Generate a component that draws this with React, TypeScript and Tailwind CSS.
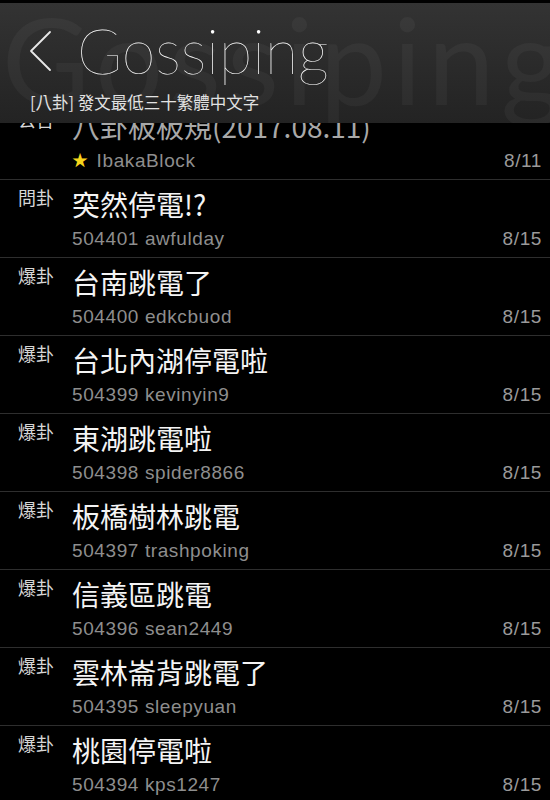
const posts = [
  { tag: '公告', title: '八卦板板規(2017.08.11)', meta: 'IbakaBlock', date: '8/11', pinned: true },
  { tag: '問卦', title: '突然停電!?', meta: '504401 awfulday', date: '8/15' },
  { tag: '爆卦', title: '台南跳電了', meta: '504400 edkcbuod', date: '8/15' },
  { tag: '爆卦', title: '台北內湖停電啦', meta: '504399 kevinyin9', date: '8/15' },
  { tag: '爆卦', title: '東湖跳電啦', meta: '504398 spider8866', date: '8/15' },
  { tag: '爆卦', title: '板橋樹林跳電', meta: '504397 trashpoking', date: '8/15' },
  { tag: '爆卦', title: '信義區跳電', meta: '504396 sean2449', date: '8/15' },
  { tag: '爆卦', title: '雲林崙背跳電了', meta: '504395 sleepyuan', date: '8/15' },
  { tag: '爆卦', title: '桃園停電啦', meta: '504394 kps1247', date: '8/15' },
];

const cjk = "font-['Noto_Sans_CJK_TC',sans-serif]";
const latin = "font-['Liberation_Sans','Noto_Sans_CJK_TC',sans-serif]";

export default function App() {
  return (
    <div className="relative h-[800px] w-[550px] overflow-hidden bg-black">
      {/* Header overlay */}
      <header className="absolute inset-x-0 top-0 z-10 h-[123px] overflow-hidden border-t-[3px] border-black bg-gradient-to-b from-[#333333] to-[#232323]">
        <div className="pointer-events-none absolute left-[2px] top-[-4px] whitespace-nowrap font-['Lato',sans-serif] text-[120px] leading-none tracking-[6px] text-white/[0.04]">
          Gossiping
        </div>
        <div className="relative flex items-center pl-[28px] pt-[17px]">
          <svg width="26" height="44" viewBox="0 0 26 44" fill="none">
            <polyline points="22,3 3,22 22,41" stroke="#e8e8e8" strokeWidth="1.8" strokeLinecap="round" strokeLinejoin="round" />
          </svg>
          <h1 className="ml-[23px] font-['Lato',sans-serif] text-[61px] font-thin leading-none text-white">Gossiping</h1>
        </div>
        <p className={`relative mt-[11px] pl-[30px] text-[16.5px] leading-[20px] text-[#e2e2e2] ${cjk}`}>[八卦] 發文最低三十繁體中文字</p>
      </header>

      {/* Post list */}
      <ul className="pt-[102px]">
        {posts.map((p, i) => (
          <li key={i} className="flex h-[78px] border-b border-[#2e2e2e]">
            <div className={`w-[72px] shrink-0 pl-[18px] pt-[8px] text-[18px] leading-[18px] text-[#d6d6d6] ${cjk}`}>{p.tag}</div>
            <div className="flex-1 pr-[8px] pt-[10px]">
              <div className={`text-[28px] leading-[28px] ${p.pinned ? 'text-[#a8a8a8]' : 'text-[#f4f4f4]'} ${cjk}`}>{p.title}</div>
              <div className={`mt-[10px] flex items-center justify-between text-[19px] leading-[22px] tracking-[0.6px] text-[#8e8e8e] ${latin}`}>
                <span className="flex items-center">
                  {p.pinned && <span className="mr-[8px] text-[16px] text-[#f6d41c]">★</span>}
                  {p.meta}
                </span>
                <span className="text-[#9a9a9a]">{p.date}</span>
              </div>
            </div>
          </li>
        ))}
      </ul>
    </div>
  );
}
